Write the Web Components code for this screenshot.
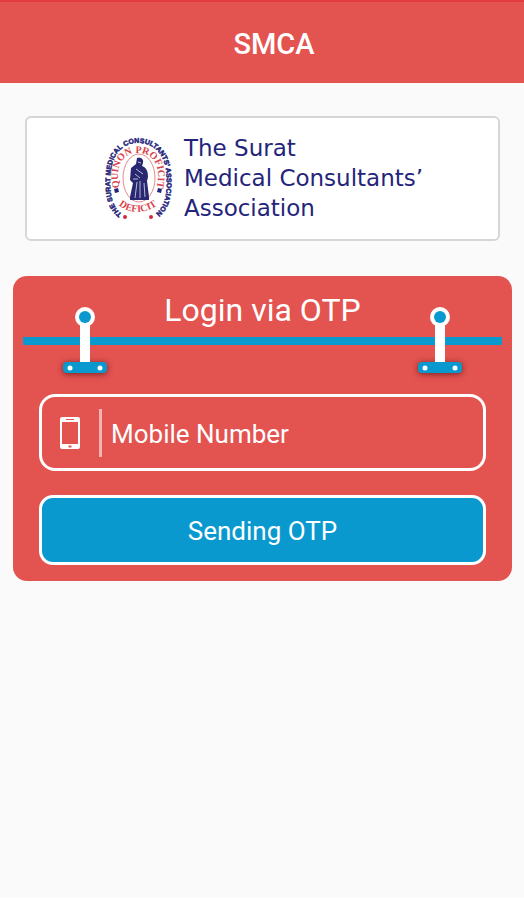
<!DOCTYPE html>
<html lang="en">
<head>
<meta charset="utf-8">
<meta name="viewport" content="width=device-width, initial-scale=1">
<title>SMCA</title>
<style>
    body{
        margin: 0;
        font-family: Roboto, "Liberation Sans", sans-serif;
        --red: #e35350;
        --blue: #0a99cf;
        --navy: #25247b;
    }
</style>
</head>
<body>

<smca-page>
    <app-bar slot="header">SMCA</app-bar>
    <association-card>
        The Surat<br>Medical Consultants’<br>Association
    </association-card>
    <login-panel>
        <span slot="title">Login via OTP</span>
        <mobile-field placeholder="Mobile Number"></mobile-field>
        <send-button>Sending OTP</send-button>
    </login-panel>
</smca-page>

<script>
class SmcaPage extends HTMLElement {

    constructor() {
        super();
        this.shadow = this.attachShadow({mode: 'open'});
        this.render();
    }

    render() {
        this.shadow.innerHTML =
        `
        <style>
            :host{
                background-color: #fafafa;
                border-bottom: 2px solid #fff;
                box-sizing: border-box;
                display: block;
                min-height: 100vh;
            }

            main{
                display: flex;
                flex-direction: column;
                gap: 35px;
                padding: 33px 12px 32px 13px;
            }
        </style>

        <slot name="header"></slot>
        <main><slot></slot></main>
        `;
    }
}

class AppBar extends HTMLElement {

    constructor() {
        super();
        this.shadow = this.attachShadow({mode: 'open'});
        this.render();
    }

    render() {
        this.shadow.innerHTML =
        `
        <style>
            :host{
                display: block;
            }

            header{
                background-color: var(--red);
                border-top: 2px solid #e23c40;
                padding: 24px 24px 21px 48px;
                text-align: center;
            }

            h1{
                color: #fff;
                font-size: 29px;
                font-weight: 500;
                line-height: 36px;
                margin: 0;
            }
        </style>

        <header><h1><slot></slot></h1></header>
        `;
    }
}

class AssociationSeal extends HTMLElement {

    constructor() {
        super();
        this.shadow = this.attachShadow({mode: 'open'});
        this.render();
    }

    render() {
        this.shadow.innerHTML =
        `
        <style>
            :host{
                display: block;
                flex: none;
            }

            svg{
                display: block;
                height: 86px;
                width: 72px;
            }

            text{
                font-family: "Liberation Serif", serif;
                font-weight: 700;
            }

            .outer{
                fill: #25247b;
                font-family: "Liberation Sans", sans-serif;
                font-size: 7px;
                stroke: #25247b;
                stroke-width: 0.5;
            }

            .inner{
                fill: #d8434c;
                font-size: 10px;
            }
        </style>

        <svg viewBox="0 0 72 86" role="img" aria-label="Association seal">
            <defs>
                <path id="ring" d="M20 79 C8 70 8 54 8.500 42 C9 20 20 8 36 8 C52 8 64 20 64.500 42 C65 55 65 70 52 80"/>
                <path id="motto" d="M18 56 C12 32 20 18 36 18 C52 18 60 32 54 56"/>
                <path id="base" d="M8 56 C16 84 56 84 64 56"/>
            </defs>
            <ellipse cx="37" cy="43" rx="16" ry="24" fill="#fff" stroke="#e58a90" stroke-width="1"/>
            <text class="outer"><textPath href="#ring">THE SURAT MEDICAL CONSULTANTS’ ASSOCIATION</textPath></text>
            <text class="inner"><textPath href="#motto" startOffset="50%" text-anchor="middle">QUINON PROFICIT</textPath></text>
            <text class="inner"><textPath href="#base" startOffset="50%" text-anchor="middle">DEFICIT</textPath></text>
            <path d="M12 54l4 -1 1 4 -4 1zM56 53l4 1 -1 4 -4 -1z" fill="#25247b"/>
            <circle cx="23" cy="82" r="2" fill="#d42b3c"/>
            <circle cx="49" cy="82" r="2" fill="#d42b3c"/>
            <path d="M35 23c4 -1 7 1 6 5l-1 3c5 2 6 6 6 11l-1 4 2 16v3H28v-3l3 -14-3 -3 1 -12 5 -4z" fill="#29276f"/>
            <path d="M36 27l3 1M34 34l7 5M33 39l5 4M35 47l-2 16M38 46v17M42 48l1 14M31 44h5" fill="none" stroke="#b9bbdc" stroke-width="1"/>
        </svg>
        `;
    }
}

class AssociationCard extends HTMLElement {

    constructor() {
        super();
        this.shadow = this.attachShadow({mode: 'open'});
        this.render();
    }

    render() {
        this.shadow.innerHTML =
        `
        <style>
            :host{
                align-items: center;
                background-color: #fff;
                border: 2px solid #d6d6d6;
                border-radius: 6px;
                box-sizing: border-box;
                display: flex;
                gap: 10px;
                justify-content: center;
                margin: 0 12px;
                min-height: 125px;
                padding: 12px 12px 14px;
            }

            p{
                color: var(--navy);
                font-family: "DejaVu Sans", sans-serif;
                font-size: 23px;
                line-height: 30px;
                margin: 0;
            }
        </style>

        <association-seal></association-seal>
        <p><slot></slot></p>
        `;
    }
}

class RailStand extends HTMLElement {

    constructor() {
        super();
        this.shadow = this.attachShadow({mode: 'open'});
        this.render();
    }

    render() {
        this.shadow.innerHTML =
        `
        <style>
            :host{
                display: block;
            }

            svg{
                display: block;
                height: 76px;
                overflow: visible;
                width: 56px;
            }

            .foot{
                filter: drop-shadow(0 1px 3px rgba(70, 10, 10, 0.7));
            }
        </style>

        <svg viewBox="0 0 56 76" aria-hidden="true">
            <rect class="foot" x="6" y="61" width="44" height="11" rx="4" fill="#0a99cf"/>
            <circle cx="28" cy="16" r="10" fill="#fff"/>
            <rect x="23" y="20" width="10" height="41" fill="#fff"/>
            <circle cx="28" cy="16" r="6" fill="#0a99cf"/>
            <circle cx="13" cy="67" r="2.500" fill="#fff"/>
            <circle cx="43" cy="67" r="2.500" fill="#fff"/>
        </svg>
        `;
    }
}

class LoginPanel extends HTMLElement {

    constructor() {
        super();
        this.shadow = this.attachShadow({mode: 'open'});
        this.render();
    }

    render() {
        this.shadow.innerHTML =
        `
        <style>
            :host{
                background-color: var(--red);
                border-radius: 14px;
                display: block;
                padding: 16px 10px;
            }

            .head{
                align-items: start;
                display: flex;
                justify-content: space-between;
                padding: 0 34px;
                position: relative;
            }

            /* the rail runs behind both stands */
            .head::before{
                background-color: var(--blue);
                content: "";
                height: 8px;
                left: 0;
                position: absolute;
                right: 0;
                top: 45px;
            }

            rail-stand{
                padding-top: 9px;
                position: relative;
            }

            h2{
                color: #fff;
                font-size: 32px;
                font-weight: 400;
                line-height: 36px;
                margin: 0;
            }

            form{
                display: flex;
                flex-direction: column;
                gap: 24px;
                padding: 17px 16px 0;
            }
        </style>

        <div class="head">
            <rail-stand></rail-stand>
            <h2><slot name="title"></slot></h2>
            <rail-stand></rail-stand>
        </div>
        <form>
            <slot></slot>
        </form>
        `;
    }
}

class MobileField extends HTMLElement {

    constructor() {
        super();
        this.shadow = this.attachShadow({mode: 'open'});
        this.render();
    }

    render() {
        const placeholder = this.getAttribute('placeholder') || '';

        this.shadow.innerHTML =
        `
        <style>
            :host{
                align-items: center;
                border: 3px solid #fff;
                border-radius: 16px;
                box-sizing: border-box;
                display: flex;
                min-height: 77px;
                padding: 0 16px 0 18px;
            }

            label{
                border-right: 3px solid #f3b5b4;
                padding: 8px 19px 8px 0;
            }

            svg{
                display: block;
                height: 32px;
                width: 20px;
            }

            input{
                background: none;
                border: 0;
                color: #fff;
                flex: 1;
                font: 26px/36px Roboto, "Liberation Sans", sans-serif;
                min-width: 0;
                outline: none;
                padding: 2px 9px 0;
            }

            input::placeholder{
                color: #fff;
                opacity: 1;
            }
        </style>

        <label for="mobile">
            <svg viewBox="0 0 20 32" role="img" aria-label="${placeholder}">
                <path fill="#fff" fill-rule="evenodd" d="M2 0h16a2 2 0 0 1 2 2v28a2 2 0 0 1 -2 2h-16a2 2 0 0 1 -2 -2v-28a2 2 0 0 1 2 -2zM2 5v22h16v-22zM6 2v1h8v-1zM8.500 28.500v2h3v-2z"/>
            </svg>
        </label>
        <input id="mobile" type="tel" placeholder="${placeholder}">
        `;
    }
}

class SendButton extends HTMLElement {

    constructor() {
        super();
        this.shadow = this.attachShadow({mode: 'open'});
        this.render();
    }

    render() {
        this.shadow.innerHTML =
        `
        <style>
            :host{
                display: block;
            }

            button{
                background-color: var(--blue);
                border: 3px solid #fff;
                border-radius: 14px;
                color: #fff;
                cursor: pointer;
                display: block;
                font: 26px/36px Roboto, "Liberation Sans", sans-serif;
                padding: 15px 16px 13px;
                width: 100%;
            }
        </style>

        <button type="button"><slot></slot></button>
        `;
    }
}

customElements.define('smca-page', SmcaPage);
customElements.define('app-bar', AppBar);
customElements.define('association-seal', AssociationSeal);
customElements.define('association-card', AssociationCard);
customElements.define('rail-stand', RailStand);
customElements.define('login-panel', LoginPanel);
customElements.define('mobile-field', MobileField);
customElements.define('send-button', SendButton);
</script>
</body>
</html>
